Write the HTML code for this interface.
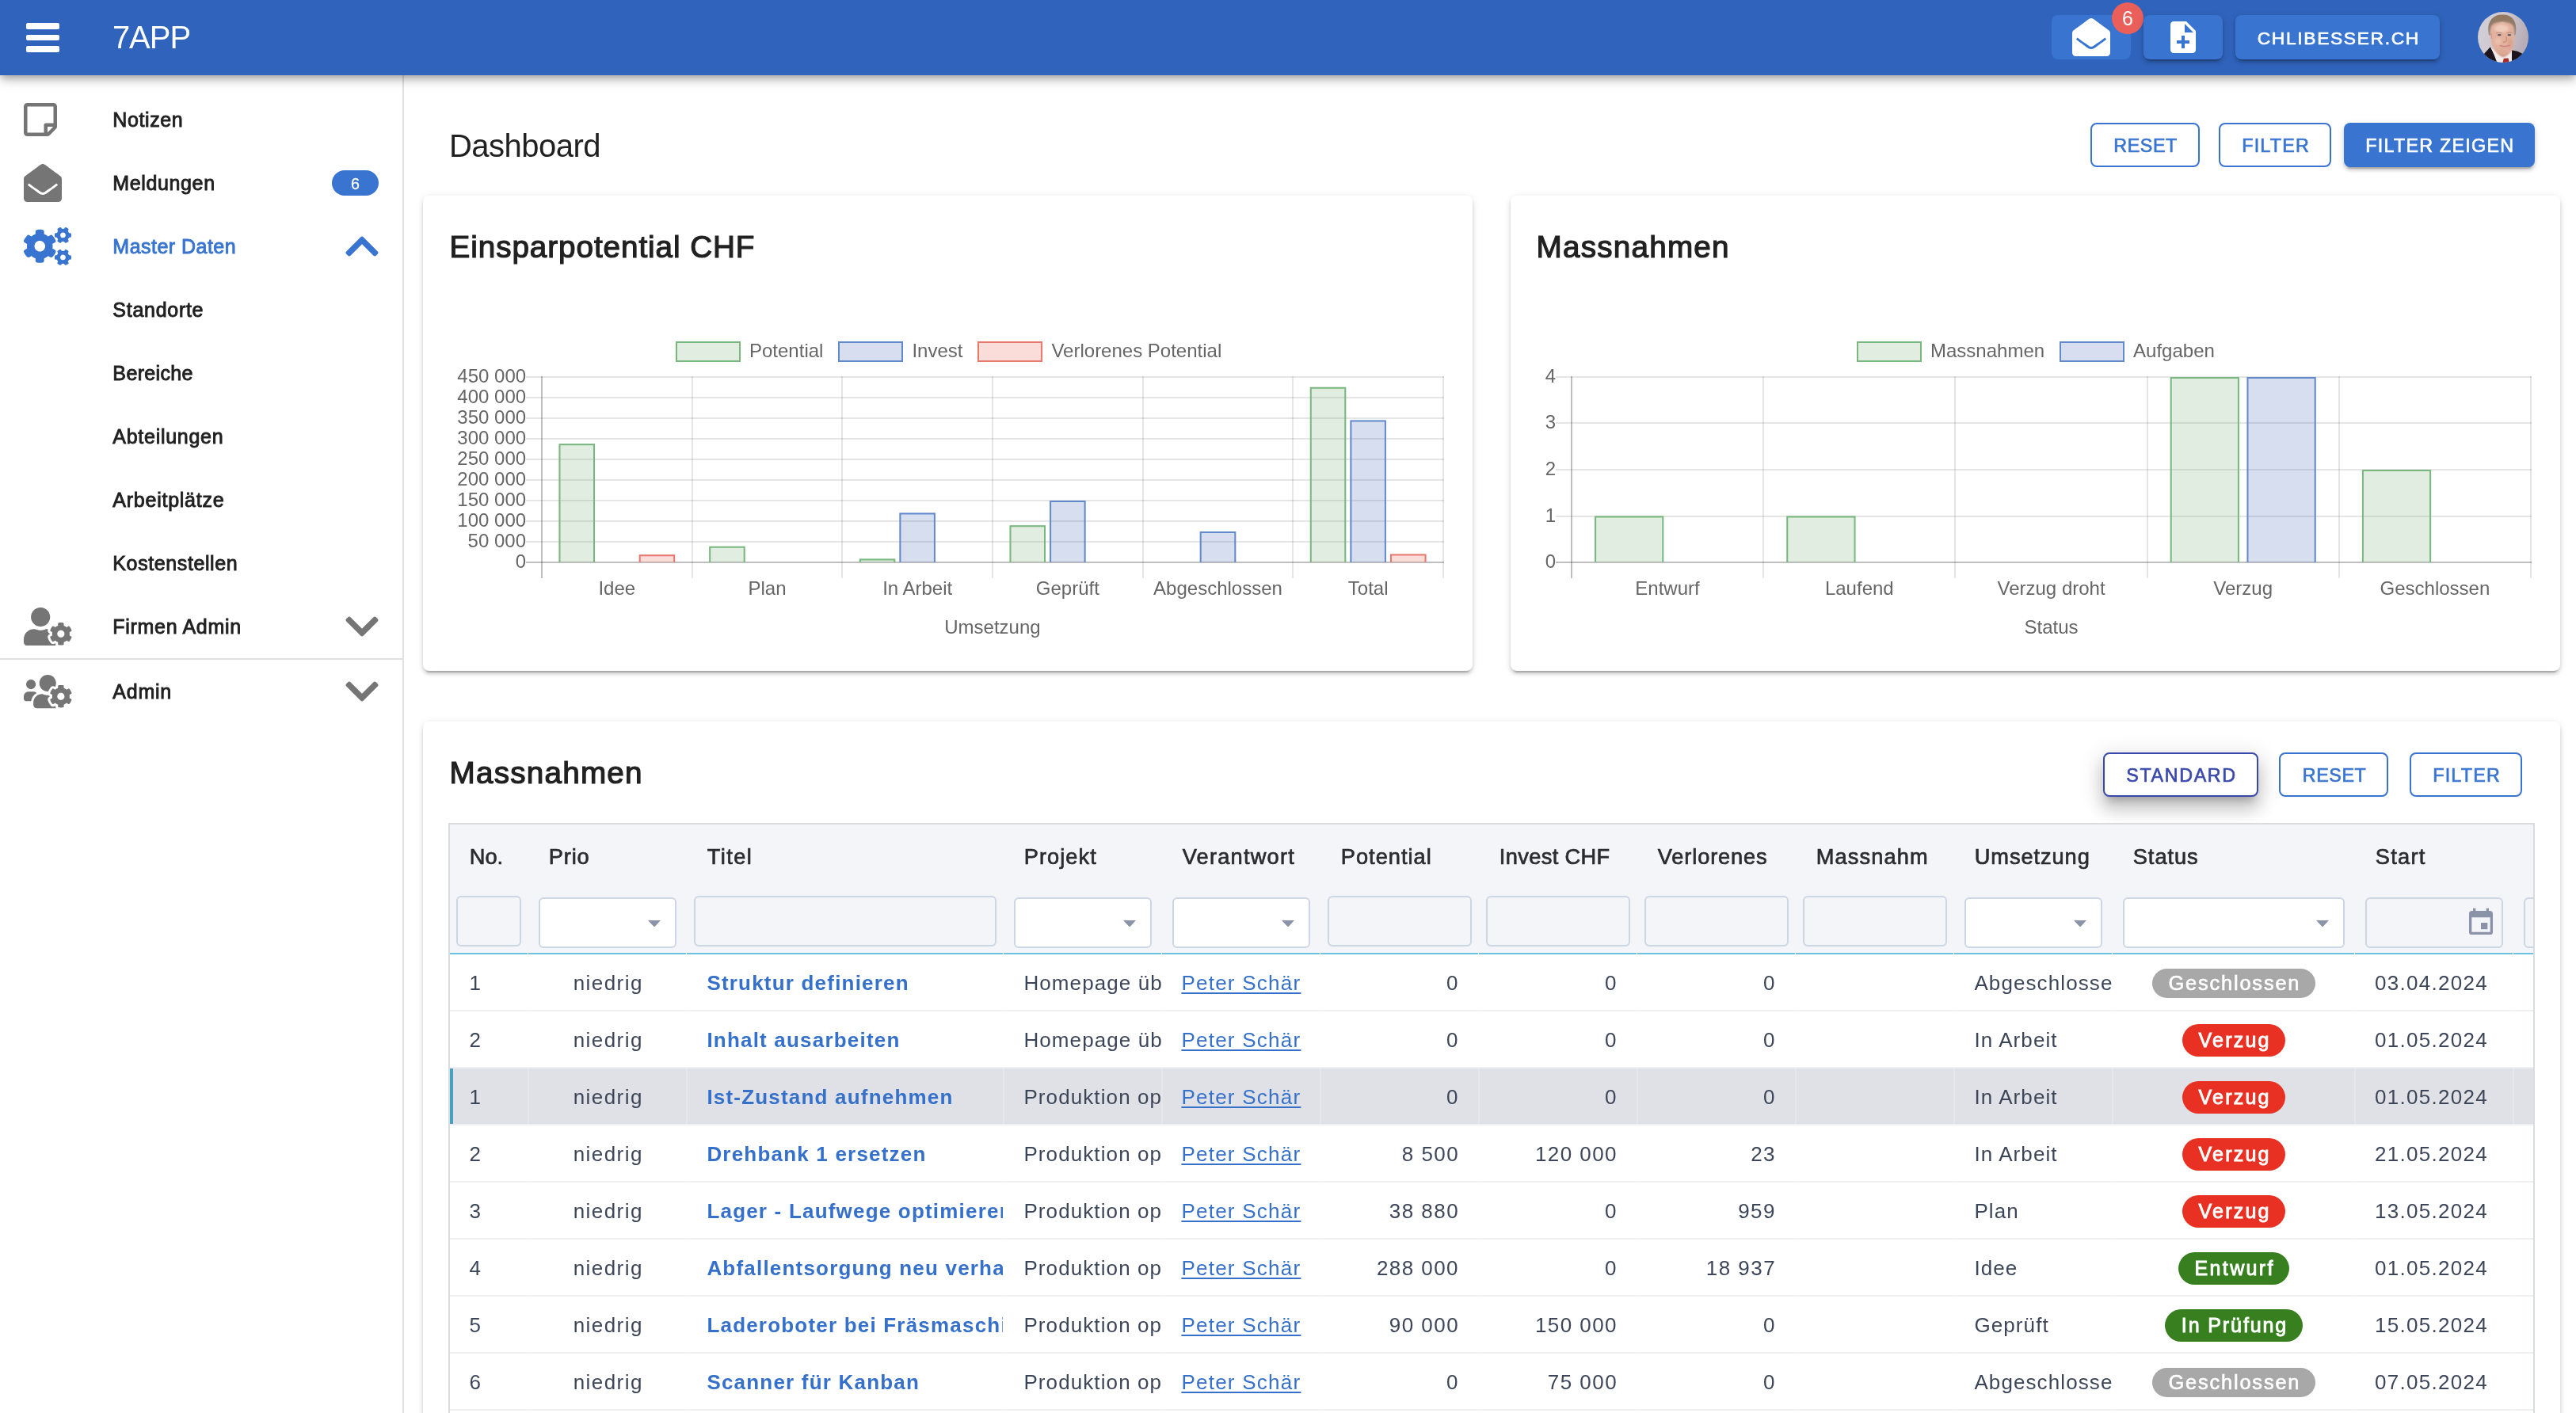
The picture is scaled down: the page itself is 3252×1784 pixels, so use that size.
<!DOCTYPE html>
<html lang="de"><head><meta charset="utf-8"><title>7APP Dashboard</title>
<style>
html,body{margin:0;padding:0;}
body{width:3252px;height:1784px;overflow:hidden;background:#fff;position:relative;font-family:"Liberation Sans",sans-serif;will-change:transform;}
.b{position:absolute;display:block;}
.t{position:absolute;white-space:nowrap;font-family:"Liberation Sans",sans-serif;}
@media (max-width:2000px){body{zoom:.5;}}
</style></head><body>
<div class="b" style="left:0px;top:95px;width:508px;height:1689px;background:#fff;"></div>
<div class="b" style="left:508px;top:95px;width:2px;height:1689px;background:#e0e0e0;"></div>
<div class="t" style="left:142.35px;top:134.83px;font-size:25.01px;line-height:33px;color:#212121;letter-spacing:0.586px;-webkit-text-stroke:0.9px #212121;">Notizen</div>
<div class="t" style="left:142.35px;top:214.83px;font-size:25.01px;line-height:33px;color:#212121;letter-spacing:0.625px;-webkit-text-stroke:0.9px #212121;">Meldungen</div>
<div class="t" style="left:142.35px;top:294.83px;font-size:25.01px;line-height:33px;color:#3874d0;letter-spacing:0.476px;-webkit-text-stroke:0.9px #3874d0;">Master Daten</div>
<div class="t" style="left:142.35px;top:374.83px;font-size:25.01px;line-height:33px;color:#212121;letter-spacing:0.720px;-webkit-text-stroke:0.9px #212121;">Standorte</div>
<div class="t" style="left:142.35px;top:454.83px;font-size:25.01px;line-height:33px;color:#212121;letter-spacing:0.359px;-webkit-text-stroke:0.9px #212121;">Bereiche</div>
<div class="t" style="left:142.35px;top:534.83px;font-size:25.01px;line-height:33px;color:#212121;letter-spacing:0.725px;-webkit-text-stroke:0.9px #212121;">Abteilungen</div>
<div class="t" style="left:142.35px;top:614.83px;font-size:25.01px;line-height:33px;color:#212121;letter-spacing:0.750px;-webkit-text-stroke:0.9px #212121;">Arbeitplätze</div>
<div class="t" style="left:142.35px;top:694.83px;font-size:25.01px;line-height:33px;color:#212121;letter-spacing:0.603px;-webkit-text-stroke:0.9px #212121;">Kostenstellen</div>
<div class="t" style="left:142.35px;top:774.83px;font-size:25.01px;line-height:33px;color:#212121;letter-spacing:0.681px;-webkit-text-stroke:0.9px #212121;">Firmen Admin</div>
<div class="t" style="left:142.35px;top:856.83px;font-size:25.01px;line-height:33px;color:#212121;letter-spacing:0.755px;-webkit-text-stroke:0.9px #212121;">Admin</div>
<div class="b" style="left:0px;top:831px;width:508px;height:2px;background:#e0e0e0;"></div>
<div class="b" style="left:419px;top:215px;width:59px;height:32px;background:#3874d0;border-radius:16px;"></div>
<div class="t" style="left:443.02px;top:219.18px;font-size:19.67px;line-height:26px;color:#fff;-webkit-text-stroke:0.3px #fff;">6</div>
<svg class="b" style="left:30px;top:127px" width="42" height="48" viewBox="0 0 448 512" ><path fill="#757575" d="M448 348.106V80c0-26.51-21.49-48-48-48H48C21.49 32 0 53.49 0 80v351.988c0 26.51 21.49 48 48 48h268.118a48 48 0 0 0 33.941-14.059l83.882-83.882A48 48 0 0 0 448 348.106zm-128 80v-76.118h76.118L320 428.106zM400 80v223.988H296c-13.255 0-24 10.745-24 24v104H48V80h352z"/></svg>
<svg class="b" style="left:30px;top:207px" width="48" height="48" viewBox="0 0 512 512" ><path fill="#757575" d="M512 464c0 26.51-21.49 48-48 48H48c-26.51 0-48-21.49-48-48V200.724a48 48 0 0 1 18.387-37.776c24.913-19.529 45.501-35.365 164.2-121.511C199.412 29.17 232.797-.347 256 .003c23.198-.354 56.596 29.172 73.413 41.433 118.687 86.137 139.303 101.995 164.2 121.512A48 48 0 0 1 512 200.724V464zm-65.666-196.605c-2.563-3.728-7.7-4.595-11.339-1.907-22.845 16.873-55.462 40.705-105.582 77.079-16.825 12.266-50.21 41.781-73.413 41.43-23.211.344-56.559-29.143-73.413-41.43-50.114-36.37-82.734-60.204-105.582-77.079-3.639-2.688-8.776-1.821-11.339 1.907l-9.072 13.196a7.998 7.998 0 0 0 1.839 10.967c22.887 16.899 55.454 40.69 105.303 76.868 20.274 14.781 56.524 47.813 92.264 47.573 35.724.242 71.961-32.771 92.263-47.573 49.85-36.179 82.418-59.97 105.303-76.868a7.998 7.998 0 0 0 1.839-10.967l-9.071-13.196z"/></svg>
<svg class="b" style="left:30px;top:287px" width="60" height="48" viewBox="0 0 640 512" ><path fill="#3874d0" d="M512.1 191l-8.2 14.3c-3 5.3-9.4 7.5-15.1 5.4-11.8-4.4-22.6-10.7-32.1-18.6-4.6-3.8-5.8-10.5-2.8-15.7l8.2-14.3c-6.9-8-12.3-17.3-15.9-27.4h-16.5c-6 0-11.2-4.3-12.2-10.3-2-12-2.1-24.6 0-37.1 1-6 6.2-10.4 12.2-10.4h16.5c3.6-10.1 9-19.4 15.9-27.4l-8.2-14.3c-3-5.2-1.9-11.9 2.8-15.7 9.5-7.9 20.4-14.2 32.1-18.6 5.7-2.1 12.1.1 15.1 5.4l8.2 14.3c10.5-1.9 21.2-1.9 31.7 0L552 6.3c3-5.3 9.4-7.5 15.1-5.4 11.8 4.4 22.6 10.7 32.1 18.6 4.6 3.8 5.8 10.5 2.8 15.7l-8.2 14.3c6.9 8 12.3 17.3 15.9 27.4h16.5c6 0 11.2 4.3 12.2 10.3 2 12 2.1 24.6 0 37.1-1 6-6.2 10.4-12.2 10.4h-16.5c-3.6 10.1-9 19.4-15.9 27.4l8.2 14.3c3 5.2 1.9 11.9-2.8 15.7-9.5 7.9-20.4 14.2-32.1 18.6-5.7 2.1-12.1-.1-15.1-5.4l-8.2-14.3c-10.4 1.9-21.2 1.9-31.7 0zm-10.5-58.8c38.5 29.6 82.4-14.3 52.8-52.8-38.5-29.7-82.4 14.3-52.8 52.8zM386.3 286.1l33.7 16.8c10.1 5.8 14.5 18.1 10.5 29.1-8.9 24.2-26.4 46.4-42.6 65.8-7.4 8.9-20.2 11.1-30.3 5.3l-29.1-16.8c-16 13.7-34.6 24.6-54.9 31.7v33.6c0 11.6-8.3 21.6-19.7 23.6-24.6 4.2-50.4 4.4-75.9 0-11.5-2-20-11.9-20-23.6V418c-20.3-7.2-38.9-18-54.9-31.7L74 403c-10 5.8-22.9 3.6-30.3-5.3-16.2-19.4-33.3-41.6-42.2-65.7-4-10.9.4-23.2 10.5-29.1l33.3-16.8c-3.9-20.9-3.9-42.4 0-63.4L12 205.8c-10.1-5.8-14.6-18.1-10.5-29 8.9-24.2 26-46.4 42.2-65.8 7.4-8.9 20.2-11.1 30.3-5.3l29.1 16.8c16-13.7 34.6-24.6 54.9-31.7V57.1c0-11.5 8.2-21.5 19.6-23.5 24.6-4.2 50.5-4.4 76-.1 11.5 2 20 11.9 20 23.6v33.6c20.3 7.2 38.9 18 54.9 31.7l29.1-16.8c10-5.8 22.9-3.6 30.3 5.3 16.2 19.4 33.2 41.6 42.1 65.8 4 10.9.1 23.2-10 29.1l-33.7 16.8c3.9 21 3.9 42.5 0 63.5zm-117.6 21.1c59.2-77-28.7-164.9-105.7-105.7-59.2 77 28.7 164.9 105.7 105.7zm243.4 182.7l-8.2 14.3c-3 5.3-9.4 7.5-15.1 5.4-11.8-4.4-22.6-10.7-32.1-18.6-4.6-3.8-5.8-10.5-2.8-15.7l8.2-14.3c-6.9-8-12.3-17.3-15.9-27.4h-16.5c-6 0-11.2-4.3-12.2-10.3-2-12-2.1-24.6 0-37.1 1-6 6.2-10.4 12.2-10.4h16.5c3.6-10.1 9-19.4 15.9-27.4l-8.2-14.3c-3-5.2-1.9-11.9 2.8-15.7 9.5-7.9 20.4-14.2 32.1-18.6 5.7-2.1 12.1.1 15.1 5.4l8.2 14.3c10.5-1.9 21.2-1.9 31.7 0l8.2-14.3c3-5.3 9.4-7.5 15.1-5.4 11.8 4.4 22.6 10.7 32.1 18.6 4.6 3.8 5.8 10.5 2.8 15.7l-8.2 14.3c6.9 8 12.3 17.3 15.9 27.4h16.5c6 0 11.2 4.3 12.2 10.3 2 12 2.1 24.6 0 37.1-1 6-6.2 10.4-12.2 10.4h-16.5c-3.6 10.1-9 19.4-15.9 27.4l8.2 14.3c3 5.2 1.9 11.9-2.8 15.7-9.5 7.9-20.4 14.2-32.1 18.6-5.7 2.1-12.1-.1-15.1-5.4l-8.2-14.3c-10.4 1.9-21.2 1.9-31.7 0zM501.6 431c38.5 29.6 82.4-14.3 52.8-52.8-38.5-29.6-82.4 14.3-52.8 52.8z"/></svg>
<svg class="b" style="left:30px;top:767px" width="60.5" height="48.4" viewBox="0 0 640 512" ><path fill="#757575" d="M610.5 373.3c2.6-14.1 2.6-28.5 0-42.6l25.8-14.9c3-1.7 4.3-5.2 3.3-8.5-6.7-21.6-18.2-41.2-33.2-57.4-2.3-2.5-6-3.1-9-1.4l-25.8 14.9c-10.9-9.3-23.4-16.5-36.900-21.3v-29.8c0-3.400-2.400-6.400-5.700-7.100-22.300-5-45-4.800-66.200 0-3.300.7-5.700 3.700-5.700 7.100v29.800c-13.500 4.800-26 12-36.900 21.300l-25.800-14.900c-2.900-1.700-6.700-1.100-9 1.400-15 16.200-26.500 35.800-33.200 57.400-1 3.300.4 6.800 3.300 8.500l25.800 14.900c-2.600 14.100-2.600 28.500 0 42.600l-25.800 14.900c-3 1.700-4.300 5.200-3.300 8.500 6.700 21.600 18.200 41.100 33.200 57.400 2.300 2.500 6 3.100 9 1.400l25.800-14.900c10.900 9.300 23.400 16.500 36.900 21.300v29.800c0 3.400 2.400 6.400 5.700 7.100 22.300 5 45 4.800 66.200 0 3.300-.7 5.700-3.700 5.700-7.100v-29.800c13.500-4.800 26-12 36.900-21.300l25.800 14.900c2.900 1.700 6.700 1.100 9-1.400 15-16.200 26.500-35.800 33.200-57.400 1-3.300-.4-6.800-3.300-8.500l-25.800-14.900zM496 400.500c-26.800 0-48.500-21.800-48.500-48.500s21.800-48.500 48.500-48.500 48.500 21.800 48.500 48.500-21.700 48.500-48.500 48.500zM224 256c70.700 0 128-57.300 128-128S294.700 0 224 0 96 57.300 96 128s57.300 128 128 128zm201.200 226.500c-2.300-1.200-4.600-2.600-6.800-3.900l-7.900 4.600c-6 3.400-12.800 5.300-19.600 5.300-10.900 0-21.400-4.600-28.900-12.600-18.300-19.800-32.300-43.900-40.200-69.600-5.500-17.700 1.900-36.400 17.900-45.700l7.900-4.600c-.1-2.600-.1-5.200 0-7.800l-7.900-4.600c-16-9.200-23.400-28-17.900-45.700.9-2.900 2.200-5.800 3.200-8.700-3.800-.3-7.500-1.200-11.400-1.200h-16.700c-22.200 10.200-46.900 16-72.900 16s-50.600-5.800-72.900-16h-16.700C60.200 288 0 348.200 0 422.400V464c0 26.500 21.500 48 48 48h352c10.100 0 19.500-3.200 27.200-8.500-1.200-3.800-2-7.700-2-11.800v-9.200z"/></svg>
<svg class="b" style="left:30px;top:849px" width="60.5" height="48.4" viewBox="0 0 640 512" ><path fill="#757575" d="M610.5 341.3c2.6-14.1 2.6-28.5 0-42.600l25.800-14.900c3-1.700 4.300-5.200 3.300-8.500-6.700-21.600-18.200-41.200-33.200-57.400-2.300-2.500-6-3.100-9-1.400l-25.800 14.900c-10.900-9.300-23.400-16.500-36.900-21.300v-29.800c0-3.400-2.400-6.400-5.700-7.100-22.300-5-45-4.800-66.200 0-3.300.7-5.700 3.700-5.700 7.100v29.800c-13.500 4.800-26 12-36.900 21.300l-25.800-14.900c-2.900-1.700-6.700-1.100-9 1.400-15 16.200-26.500 35.800-33.200 57.400-1 3.300.4 6.800 3.300 8.500l25.800 14.900c-2.600 14.100-2.600 28.500 0 42.600l-25.800 14.900c-3 1.700-4.300 5.200-3.300 8.500 6.700 21.600 18.200 41.100 33.200 57.400 2.300 2.500 6 3.100 9 1.400l25.800-14.900c10.900 9.300 23.400 16.500 36.900 21.300v29.800c0 3.400 2.400 6.400 5.700 7.100 22.300 5 45 4.800 66.200 0 3.300-.7 5.700-3.700 5.700-7.100v-29.800c13.500-4.800 26-12 36.900-21.300l25.800 14.900c2.900 1.700 6.700 1.100 9-1.400 15-16.200 26.500-35.800 33.200-57.400 1-3.300-.4-6.800-3.300-8.500l-25.800-14.900zM496 368.500c-26.800 0-48.500-21.800-48.500-48.500s21.800-48.500 48.500-48.500 48.500 21.800 48.500 48.500-21.700 48.500-48.500 48.500zM96 224c35.300 0 64-28.700 64-64s-28.700-64-64-64-64 28.700-64 64 28.700 64 64 64zm224 32c1.900 0 3.700-.5 5.600-.6 8.300-21.700 20.500-42.100 36.300-59.200 7.400-8 17.900-12.600 28.900-12.600 6.900 0 13.700 1.800 19.600 5.300l7.900 4.600c.8-.5 1.600-.9 2.400-1.400 7-14.600 11.200-30.800 11.200-48 0-61.900-50.100-112-112-112S208 82.100 208 144c0 61.900 50.100 112 112 112zm105.200 194.500c-2.300-1.200-4.600-2.600-6.800-3.900-8.200 4.800-15.300 9.800-27.500 9.800-10.900 0-21.400-4.600-28.900-12.600-18.300-19.800-32.300-43.900-40.200-69.600-10.700-34.500 24.900-49.700 25.800-50.300-.1-2.600-.1-5.200 0-7.800l-7.900-4.600c-3.800-2.200-7-5-9.800-8.100-3.300.2-6.500.6-9.800.6-24.600 0-47.600-6-68.500-16h-8.300C179.600 288 128 339.600 128 403.200V432c0 26.500 21.500 48 48 48h255.400c-3.700-6-6.200-12.800-6.200-20.300v-9.200zM173.100 274.600C161.500 263.100 145.600 256 128 256H64c-35.300 0-64 28.700-64 64v32c0 17.700 14.300 32 32 32h65.900c6.300-47.400 34.900-87.300 75.200-109.400z"/></svg>
<svg class="b" style="left:436px;top:287px" width="42" height="48" viewBox="0 0 448 512" ><path fill="#3874d0" d="M240.971 130.524l194.343 194.343c9.373 9.373 9.373 24.569 0 33.941l-22.667 22.667c-9.357 9.357-24.522 9.375-33.901.04L224 227.495 69.255 381.516c-9.379 9.335-24.544 9.317-33.901-.04l-22.667-22.667c-9.373-9.373-9.373-24.569 0-33.941L207.03 130.525c9.372-9.373 24.568-9.373 33.941-.001z"/></svg>
<svg class="b" style="left:436px;top:767px" width="42" height="48" viewBox="0 0 448 512" ><path fill="#757575" d="M207.029 381.476L12.686 187.132c-9.373-9.373-9.373-24.569 0-33.941l22.667-22.667c9.357-9.357 24.522-9.375 33.901-.04L224 284.505l154.745-154.021c9.379-9.335 24.544-9.317 33.901.04l22.667 22.667c9.373 9.373 9.373 24.569 0 33.941L240.971 381.476c-9.373 9.372-24.569 9.372-33.942 0z"/></svg>
<svg class="b" style="left:436px;top:849px" width="42" height="48" viewBox="0 0 448 512" ><path fill="#757575" d="M207.029 381.476L12.686 187.132c-9.373-9.373-9.373-24.569 0-33.941l22.667-22.667c9.357-9.357 24.522-9.375 33.901-.04L224 284.505l154.745-154.021c9.379-9.335 24.544-9.317 33.901.04l22.667 22.667c9.373 9.373 9.373 24.569 0 33.941L240.971 381.476c-9.373 9.372-24.569 9.372-33.942 0z"/></svg>
<div class="t" style="left:566.90px;top:157.64px;font-size:40px;line-height:52px;color:#212121;letter-spacing:-0.506px;">Dashboard</div>
<div class="b" style="left:2639px;top:155px;width:138px;height:56px;border:2px solid #3874d0;border-radius:8px;box-sizing:border-box;background:#fff;"></div>
<div class="t" style="left:2668.22px;top:169.23px;font-size:23.29px;line-height:30px;color:#3874d0;letter-spacing:0.604px;-webkit-text-stroke:0.65px #3874d0;">RESET</div>
<div class="b" style="left:2801px;top:155px;width:142px;height:56px;border:2px solid #3874d0;border-radius:8px;box-sizing:border-box;background:#fff;"></div>
<div class="t" style="left:2830.22px;top:169.23px;font-size:23.29px;line-height:30px;color:#3874d0;letter-spacing:1.233px;-webkit-text-stroke:0.65px #3874d0;">FILTER</div>
<div class="b" style="left:2959px;top:155px;width:241px;height:56px;background:#3874d0;border-radius:8px;box-shadow:0 6px 2px -4px rgba(0,0,0,.2),0 4px 4px 0 rgba(0,0,0,.14),0 2px 10px 0 rgba(0,0,0,.12);"></div>
<div class="t" style="left:2986.22px;top:169.23px;font-size:23.29px;line-height:30px;color:#fff;letter-spacing:1.271px;-webkit-text-stroke:0.65px #fff;">FILTER ZEIGEN</div>
<div class="b" style="left:534px;top:247px;width:1325px;height:600px;background:#fff;border-radius:8px;box-shadow:0 6px 2px -4px rgba(0,0,0,.2),0 4px 4px 0 rgba(0,0,0,.14),0 2px 10px 0 rgba(0,0,0,.12);"></div>
<div class="b" style="left:1907px;top:247px;width:1325px;height:600px;background:#fff;border-radius:8px;box-shadow:0 6px 2px -4px rgba(0,0,0,.2),0 4px 4px 0 rgba(0,0,0,.14),0 2px 10px 0 rgba(0,0,0,.12);"></div>
<div class="b" style="left:534px;top:911px;width:2698px;height:900px;background:#fff;border-radius:8px;box-shadow:0 6px 2px -4px rgba(0,0,0,.2),0 4px 4px 0 rgba(0,0,0,.14),0 2px 10px 0 rgba(0,0,0,.12);"></div>
<div class="t" style="left:567.50px;top:286.60px;font-size:38.68px;line-height:50px;color:#212121;letter-spacing:0.917px;-webkit-text-stroke:1.2px #212121;">Einsparpotential CHF</div>
<div class="t" style="left:1939.50px;top:286.60px;font-size:38.68px;line-height:50px;color:#212121;letter-spacing:1.213px;-webkit-text-stroke:1.2px #212121;">Massnahmen</div>
<div class="t" style="left:567.50px;top:950.60px;font-size:38.68px;line-height:50px;color:#212121;letter-spacing:1.213px;-webkit-text-stroke:1.2px #212121;">Massnahmen</div>
<svg class="b" style="left:0;top:0" width="3252" height="900" viewBox="0 0 3252 900"><rect x="683" y="475" width="2" height="255" fill="rgba(0,0,0,.25)"/><rect x="873" y="475" width="2" height="255" fill="rgba(0,0,0,.1)"/><rect x="1062" y="475" width="2" height="255" fill="rgba(0,0,0,.1)"/><rect x="1252" y="475" width="2" height="255" fill="rgba(0,0,0,.1)"/><rect x="1442" y="475" width="2" height="255" fill="rgba(0,0,0,.1)"/><rect x="1631" y="475" width="2" height="255" fill="rgba(0,0,0,.1)"/><rect x="1821" y="475" width="2" height="255" fill="rgba(0,0,0,.1)"/><rect x="664" y="709" width="1159" height="2" fill="rgba(0,0,0,.25)"/><rect x="664" y="683" width="1159" height="2" fill="rgba(0,0,0,.1)"/><rect x="664" y="657" width="1159" height="2" fill="rgba(0,0,0,.1)"/><rect x="664" y="631" width="1159" height="2" fill="rgba(0,0,0,.1)"/><rect x="664" y="605" width="1159" height="2" fill="rgba(0,0,0,.1)"/><rect x="664" y="579" width="1159" height="2" fill="rgba(0,0,0,.1)"/><rect x="664" y="553" width="1159" height="2" fill="rgba(0,0,0,.1)"/><rect x="664" y="527" width="1159" height="2" fill="rgba(0,0,0,.1)"/><rect x="664" y="501" width="1159" height="2" fill="rgba(0,0,0,.1)"/><rect x="664" y="475" width="1159" height="2" fill="rgba(0,0,0,.1)"/><rect x="705.5" y="560.2" width="45.5" height="149.8" fill="rgba(100,165,100,.2)"/><path d="M706.5 710 L706.5 561.2 L750.0 561.2 L750.0 710" fill="none" stroke="#78b77d" stroke-width="2"/><rect x="806.7" y="700.2" width="45.5" height="9.8" fill="rgba(232,80,66,.2)"/><path d="M807.7 710 L807.7 701.2 L851.2 701.2 L851.2 710" fill="none" stroke="#e8796e" stroke-width="2"/><rect x="895.2" y="689.8" width="45.5" height="20.2" fill="rgba(100,165,100,.2)"/><path d="M896.2 710 L896.2 690.8 L939.7 690.8 L939.7 710" fill="none" stroke="#78b77d" stroke-width="2"/><rect x="1084.8" y="705.6" width="45.5" height="4.4" fill="rgba(100,165,100,.2)"/><path d="M1085.8 710 L1085.8 706.6 L1129.3 706.6 L1129.3 710" fill="none" stroke="#78b77d" stroke-width="2"/><rect x="1135.4" y="647.6" width="45.5" height="62.4" fill="rgba(55,92,182,.2)"/><path d="M1136.4 710 L1136.4 648.6 L1179.9 648.6 L1179.9 710" fill="none" stroke="#628acb" stroke-width="2"/><rect x="1274.5" y="663.2" width="45.5" height="46.8" fill="rgba(100,165,100,.2)"/><path d="M1275.5 710 L1275.5 664.2 L1319.0 664.2 L1319.0 710" fill="none" stroke="#78b77d" stroke-width="2"/><rect x="1325.1" y="632.0" width="45.5" height="78.0" fill="rgba(55,92,182,.2)"/><path d="M1326.1 710 L1326.1 633.0 L1369.6 633.0 L1369.6 710" fill="none" stroke="#628acb" stroke-width="2"/><rect x="1514.7" y="671.0" width="45.5" height="39.0" fill="rgba(55,92,182,.2)"/><path d="M1515.7 710 L1515.7 672.0 L1559.3 672.0 L1559.3 710" fill="none" stroke="#628acb" stroke-width="2"/><rect x="1653.8" y="488.8" width="45.5" height="221.2" fill="rgba(100,165,100,.2)"/><path d="M1654.8 710 L1654.8 489.8 L1698.3 489.8 L1698.3 710" fill="none" stroke="#78b77d" stroke-width="2"/><rect x="1704.4" y="530.6" width="45.5" height="179.4" fill="rgba(55,92,182,.2)"/><path d="M1705.4 710 L1705.4 531.6 L1748.9 531.6 L1748.9 710" fill="none" stroke="#628acb" stroke-width="2"/><rect x="1755.0" y="699.6" width="45.5" height="10.4" fill="rgba(232,80,66,.2)"/><path d="M1756.0 710 L1756.0 700.6 L1799.5 700.6 L1799.5 710" fill="none" stroke="#e8796e" stroke-width="2"/></svg>
<div class="t" style="left:650.85px;top:692.68px;font-size:24px;line-height:31px;color:#666;">0</div>
<div class="t" style="left:590.60px;top:666.68px;font-size:24px;line-height:31px;color:#666;">50 000</div>
<div class="t" style="left:577.35px;top:640.68px;font-size:24px;line-height:31px;color:#666;">100 000</div>
<div class="t" style="left:577.35px;top:614.68px;font-size:24px;line-height:31px;color:#666;">150 000</div>
<div class="t" style="left:577.35px;top:588.68px;font-size:24px;line-height:31px;color:#666;">200 000</div>
<div class="t" style="left:577.35px;top:562.68px;font-size:24px;line-height:31px;color:#666;">250 000</div>
<div class="t" style="left:577.35px;top:536.68px;font-size:24px;line-height:31px;color:#666;">300 000</div>
<div class="t" style="left:577.35px;top:510.68px;font-size:24px;line-height:31px;color:#666;">350 000</div>
<div class="t" style="left:577.35px;top:484.68px;font-size:24px;line-height:31px;color:#666;">400 000</div>
<div class="t" style="left:577.35px;top:458.68px;font-size:24px;line-height:31px;color:#666;">450 000</div>
<div class="t" style="left:755.46px;top:727.18px;font-size:24px;line-height:31px;color:#666;">Idee</div>
<div class="t" style="left:944.50px;top:727.18px;font-size:24px;line-height:31px;color:#666;">Plan</div>
<div class="t" style="left:1114.17px;top:727.18px;font-size:24px;line-height:31px;color:#666;">In Arbeit</div>
<div class="t" style="left:1307.83px;top:727.18px;font-size:24px;line-height:31px;color:#666;">Geprüft</div>
<div class="t" style="left:1456.12px;top:727.18px;font-size:24px;line-height:31px;color:#666;">Abgeschlossen</div>
<div class="t" style="left:1701.79px;top:727.18px;font-size:24px;line-height:31px;color:#666;">Total</div>
<div class="t" style="left:1192.25px;top:776.18px;font-size:24px;line-height:31px;color:#666;">Umsetzung</div>
<div class="b" style="left:853px;top:431px;width:82px;height:26px;background:rgba(100,165,100,.2);border:2px solid #78b77d;box-sizing:border-box;background-clip:padding-box;"></div>
<div class="t" style="left:946.00px;top:427.18px;font-size:24px;line-height:31px;color:#666;">Potential</div>
<div class="b" style="left:1058.3984375px;top:431px;width:82px;height:26px;background:rgba(55,92,182,.2);border:2px solid #628acb;box-sizing:border-box;background-clip:padding-box;"></div>
<div class="t" style="left:1151.40px;top:427.18px;font-size:24px;line-height:31px;color:#666;">Invest</div>
<div class="b" style="left:1234.4296875px;top:431px;width:82px;height:26px;background:rgba(232,80,66,.2);border:2px solid #e8796e;box-sizing:border-box;background-clip:padding-box;"></div>
<div class="t" style="left:1327.43px;top:427.18px;font-size:24px;line-height:31px;color:#666;">Verlorenes Potential</div>
<svg class="b" style="left:0;top:0" width="3252" height="900" viewBox="0 0 3252 900"><rect x="1983" y="475" width="2" height="255" fill="rgba(0,0,0,.25)"/><rect x="2225" y="475" width="2" height="255" fill="rgba(0,0,0,.1)"/><rect x="2467" y="475" width="2" height="255" fill="rgba(0,0,0,.1)"/><rect x="2710" y="475" width="2" height="255" fill="rgba(0,0,0,.1)"/><rect x="2952" y="475" width="2" height="255" fill="rgba(0,0,0,.1)"/><rect x="3194" y="475" width="2" height="255" fill="rgba(0,0,0,.1)"/><rect x="1964" y="709" width="1232" height="2" fill="rgba(0,0,0,.25)"/><rect x="1964" y="651" width="1232" height="2" fill="rgba(0,0,0,.1)"/><rect x="1964" y="592" width="1232" height="2" fill="rgba(0,0,0,.1)"/><rect x="1964" y="533" width="1232" height="2" fill="rgba(0,0,0,.1)"/><rect x="1964" y="475" width="1232" height="2" fill="rgba(0,0,0,.1)"/><rect x="2013.1" y="651.5" width="87.2" height="58.5" fill="rgba(100,165,100,.2)"/><path d="M2014.1 710 L2014.1 652.5 L2099.3 652.5 L2099.3 710" fill="none" stroke="#78b77d" stroke-width="2"/><rect x="2255.3" y="651.5" width="87.2" height="58.5" fill="rgba(100,165,100,.2)"/><path d="M2256.3 710 L2256.3 652.5 L2341.5 652.5 L2341.5 710" fill="none" stroke="#78b77d" stroke-width="2"/><rect x="2739.7" y="476.0" width="87.2" height="234.0" fill="rgba(100,165,100,.2)"/><path d="M2740.7 710 L2740.7 477.0 L2825.9 477.0 L2825.9 710" fill="none" stroke="#78b77d" stroke-width="2"/><rect x="2836.5" y="476.0" width="87.2" height="234.0" fill="rgba(55,92,182,.2)"/><path d="M2837.5 710 L2837.5 477.0 L2922.7 477.0 L2922.7 710" fill="none" stroke="#628acb" stroke-width="2"/><rect x="2981.9" y="593.0" width="87.2" height="117.0" fill="rgba(100,165,100,.2)"/><path d="M2982.9 710 L2982.9 594.0 L3068.1 594.0 L3068.1 710" fill="none" stroke="#78b77d" stroke-width="2"/></svg>
<div class="t" style="left:1950.85px;top:692.68px;font-size:24px;line-height:31px;color:#666;">0</div>
<div class="t" style="left:1950.85px;top:634.68px;font-size:24px;line-height:31px;color:#666;">1</div>
<div class="t" style="left:1950.85px;top:575.68px;font-size:24px;line-height:31px;color:#666;">2</div>
<div class="t" style="left:1950.85px;top:516.68px;font-size:24px;line-height:31px;color:#666;">3</div>
<div class="t" style="left:1950.85px;top:458.68px;font-size:24px;line-height:31px;color:#666;">4</div>
<div class="t" style="left:2064.35px;top:727.18px;font-size:24px;line-height:31px;color:#666;">Entwurf</div>
<div class="t" style="left:2303.93px;top:727.18px;font-size:24px;line-height:31px;color:#666;">Laufend</div>
<div class="t" style="left:2521.50px;top:727.18px;font-size:24px;line-height:31px;color:#666;">Verzug droht</div>
<div class="t" style="left:2794.32px;top:727.18px;font-size:24px;line-height:31px;color:#666;">Verzug</div>
<div class="t" style="left:3004.52px;top:727.18px;font-size:24px;line-height:31px;color:#666;">Geschlossen</div>
<div class="t" style="left:2555.50px;top:776.18px;font-size:24px;line-height:31px;color:#666;">Status</div>
<div class="b" style="left:2344px;top:431px;width:82px;height:26px;background:rgba(100,165,100,.2);border:2px solid #78b77d;box-sizing:border-box;background-clip:padding-box;"></div>
<div class="t" style="left:2437.00px;top:427.18px;font-size:24px;line-height:31px;color:#666;">Massnahmen</div>
<div class="b" style="left:2600.0703125px;top:431px;width:82px;height:26px;background:rgba(55,92,182,.2);border:2px solid #628acb;box-sizing:border-box;background-clip:padding-box;"></div>
<div class="t" style="left:2693.07px;top:427.18px;font-size:24px;line-height:31px;color:#666;">Aufgaben</div>
<div class="b" style="left:2655px;top:950px;width:196px;height:56px;border:2px solid #3949ab;border-radius:8px;box-sizing:border-box;background:#fff;box-shadow:0 10px 10px -6px rgba(0,0,0,.2),0 16px 20px 2px rgba(0,0,0,.14),0 6px 28px 4px rgba(0,0,0,.12);"></div>
<div class="t" style="left:2684.22px;top:964.23px;font-size:23.29px;line-height:30px;color:#3949ab;letter-spacing:1.655px;-webkit-text-stroke:0.65px #3949ab;">STANDARD</div>
<div class="b" style="left:2877px;top:950px;width:138px;height:56px;border:2px solid #3874d0;border-radius:8px;box-sizing:border-box;background:#fff;"></div>
<div class="t" style="left:2906.72px;top:964.23px;font-size:23.29px;line-height:30px;color:#3874d0;letter-spacing:0.604px;-webkit-text-stroke:0.65px #3874d0;">RESET</div>
<div class="b" style="left:3042px;top:950px;width:142px;height:56px;border:2px solid #3874d0;border-radius:8px;box-sizing:border-box;background:#fff;"></div>
<div class="t" style="left:3071.22px;top:964.23px;font-size:23.29px;line-height:30px;color:#3874d0;letter-spacing:1.233px;-webkit-text-stroke:0.65px #3874d0;">FILTER</div>
<div class="b" style="left:566px;top:1039px;width:2634px;height:760px;border:2px solid #d8dcde;box-sizing:border-box;background:#fff;"></div>
<div class="b" style="left:568px;top:1041px;width:2630px;height:162px;background:#f4f5f9;"></div>
<div class="t" style="left:592.75px;top:1064.06px;font-size:27.23px;line-height:35px;color:#2b2b30;letter-spacing:0.016px;-webkit-text-stroke:0.7px #2b2b30;">No.</div>
<div class="b" style="left:568px;top:1203px;width:98px;height:2px;background:#6cc3e0;"></div>
<div class="t" style="left:692.75px;top:1064.06px;font-size:27.23px;line-height:35px;color:#2b2b30;letter-spacing:0.845px;-webkit-text-stroke:0.7px #2b2b30;">Prio</div>
<div class="b" style="left:667px;top:1203px;width:199px;height:2px;background:#6cc3e0;"></div>
<div class="t" style="left:892.75px;top:1064.06px;font-size:27.23px;line-height:35px;color:#2b2b30;letter-spacing:1.384px;-webkit-text-stroke:0.7px #2b2b30;">Titel</div>
<div class="b" style="left:867px;top:1203px;width:399px;height:2px;background:#6cc3e0;"></div>
<div class="t" style="left:1292.75px;top:1064.06px;font-size:27.23px;line-height:35px;color:#2b2b30;letter-spacing:1.052px;-webkit-text-stroke:0.7px #2b2b30;">Projekt</div>
<div class="b" style="left:1267px;top:1203px;width:199px;height:2px;background:#6cc3e0;"></div>
<div class="t" style="left:1492.75px;top:1064.06px;font-size:27.23px;line-height:35px;color:#2b2b30;letter-spacing:1.205px;-webkit-text-stroke:0.7px #2b2b30;">Verantwort</div>
<div class="b" style="left:1467px;top:1203px;width:199px;height:2px;background:#6cc3e0;"></div>
<div class="t" style="left:1692.75px;top:1064.06px;font-size:27.23px;line-height:35px;color:#2b2b30;letter-spacing:1.010px;-webkit-text-stroke:0.7px #2b2b30;">Potential</div>
<div class="b" style="left:1667px;top:1203px;width:199px;height:2px;background:#6cc3e0;"></div>
<div class="t" style="left:1892.75px;top:1064.06px;font-size:27.23px;line-height:35px;color:#2b2b30;letter-spacing:0.372px;-webkit-text-stroke:0.7px #2b2b30;">Invest CHF</div>
<div class="b" style="left:1867px;top:1203px;width:199px;height:2px;background:#6cc3e0;"></div>
<div class="t" style="left:2092.75px;top:1064.06px;font-size:27.23px;line-height:35px;color:#2b2b30;letter-spacing:0.872px;-webkit-text-stroke:0.7px #2b2b30;">Verlorenes</div>
<div class="b" style="left:2067px;top:1203px;width:199px;height:2px;background:#6cc3e0;"></div>
<div class="t" style="left:2292.75px;top:1064.06px;font-size:27.23px;line-height:35px;color:#2b2b30;letter-spacing:1.121px;-webkit-text-stroke:0.7px #2b2b30;">Massnahm</div>
<div class="b" style="left:2267px;top:1203px;width:199px;height:2px;background:#6cc3e0;"></div>
<div class="t" style="left:2492.75px;top:1064.06px;font-size:27.23px;line-height:35px;color:#2b2b30;letter-spacing:0.919px;-webkit-text-stroke:0.7px #2b2b30;">Umsetzung</div>
<div class="b" style="left:2467px;top:1203px;width:199px;height:2px;background:#6cc3e0;"></div>
<div class="t" style="left:2692.75px;top:1064.06px;font-size:27.23px;line-height:35px;color:#2b2b30;letter-spacing:0.961px;-webkit-text-stroke:0.7px #2b2b30;">Status</div>
<div class="b" style="left:2667px;top:1203px;width:305px;height:2px;background:#6cc3e0;"></div>
<div class="t" style="left:2998.75px;top:1064.06px;font-size:27.23px;line-height:35px;color:#2b2b30;letter-spacing:1.261px;-webkit-text-stroke:0.7px #2b2b30;">Start</div>
<div class="b" style="left:2973px;top:1203px;width:199px;height:2px;background:#6cc3e0;"></div>
<div class="b" style="left:3173px;top:1203px;width:25px;height:2px;background:#6cc3e0;"></div>
<div class="b" style="left:576px;top:1131px;width:82px;height:64px;border:2px solid #ccd6e4;border-radius:6px;box-sizing:border-box;"></div>
<div class="b" style="left:680px;top:1133px;width:174px;height:64px;border:2px solid #ccd6e4;border-radius:6px;box-sizing:border-box;background:#fff;"></div>
<svg class="b" style="left:818px;top:1161.5px" width="16" height="8.5" viewBox="0 0 16 8.5"><path d="M0 0H16L8 8.5Z" fill="#8b93a9"/></svg>
<div class="b" style="left:876px;top:1131px;width:382px;height:64px;border:2px solid #ccd6e4;border-radius:6px;box-sizing:border-box;"></div>
<div class="b" style="left:1280px;top:1133px;width:174px;height:64px;border:2px solid #ccd6e4;border-radius:6px;box-sizing:border-box;background:#fff;"></div>
<svg class="b" style="left:1418px;top:1161.5px" width="16" height="8.5" viewBox="0 0 16 8.5"><path d="M0 0H16L8 8.5Z" fill="#8b93a9"/></svg>
<div class="b" style="left:1480px;top:1133px;width:174px;height:64px;border:2px solid #ccd6e4;border-radius:6px;box-sizing:border-box;background:#fff;"></div>
<svg class="b" style="left:1618px;top:1161.5px" width="16" height="8.5" viewBox="0 0 16 8.5"><path d="M0 0H16L8 8.5Z" fill="#8b93a9"/></svg>
<div class="b" style="left:1676px;top:1131px;width:182px;height:64px;border:2px solid #ccd6e4;border-radius:6px;box-sizing:border-box;"></div>
<div class="b" style="left:1876px;top:1131px;width:182px;height:64px;border:2px solid #ccd6e4;border-radius:6px;box-sizing:border-box;"></div>
<div class="b" style="left:2076px;top:1131px;width:182px;height:64px;border:2px solid #ccd6e4;border-radius:6px;box-sizing:border-box;"></div>
<div class="b" style="left:2276px;top:1131px;width:182px;height:64px;border:2px solid #ccd6e4;border-radius:6px;box-sizing:border-box;"></div>
<div class="b" style="left:2480px;top:1133px;width:174px;height:64px;border:2px solid #ccd6e4;border-radius:6px;box-sizing:border-box;background:#fff;"></div>
<svg class="b" style="left:2618px;top:1161.5px" width="16" height="8.5" viewBox="0 0 16 8.5"><path d="M0 0H16L8 8.5Z" fill="#8b93a9"/></svg>
<div class="b" style="left:2680px;top:1133px;width:280px;height:64px;border:2px solid #ccd6e4;border-radius:6px;box-sizing:border-box;background:#fff;"></div>
<svg class="b" style="left:2924px;top:1161.5px" width="16" height="8.5" viewBox="0 0 16 8.5"><path d="M0 0H16L8 8.5Z" fill="#8b93a9"/></svg>
<div class="b" style="left:2986px;top:1133px;width:174px;height:64px;border:2px solid #ccd6e4;border-radius:6px;box-sizing:border-box;"></div>
<svg class="b" style="left:3112px;top:1145px" width="40" height="40" viewBox="0 0 24 24" ><path fill="#8b93a9" d="M19,19H5V8H19M16,1V3H8V1H6V3H5C3.890,3 3,3.890 3,5V19A2,2 0 0,0 5,21H19A2,2 0 0,0 21,19V5C21,3.890 20.100,3 19,3H18V1M17,12H12V17H17V12Z"/></svg>
<div class="b" style="left:3186px;top:1133px;width:30px;height:64px;border:2px solid #ccd6e4;border-radius:6px;box-sizing:border-box;clip-path:inset(0 18px 0 0);"></div>
<div class="b" style="left:568px;top:1275px;width:2630px;height:2px;background:#eef0f2;"></div>
<div class="b" style="left:666px;top:1205px;width:2px;height:72px;background:rgba(255,255,255,.22);"></div>
<div class="b" style="left:866px;top:1205px;width:2px;height:72px;background:rgba(255,255,255,.22);"></div>
<div class="b" style="left:1266px;top:1205px;width:2px;height:72px;background:rgba(255,255,255,.22);"></div>
<div class="b" style="left:1466px;top:1205px;width:2px;height:72px;background:rgba(255,255,255,.22);"></div>
<div class="b" style="left:1666px;top:1205px;width:2px;height:72px;background:rgba(255,255,255,.22);"></div>
<div class="b" style="left:1866px;top:1205px;width:2px;height:72px;background:rgba(255,255,255,.22);"></div>
<div class="b" style="left:2066px;top:1205px;width:2px;height:72px;background:rgba(255,255,255,.22);"></div>
<div class="b" style="left:2266px;top:1205px;width:2px;height:72px;background:rgba(255,255,255,.22);"></div>
<div class="b" style="left:2466px;top:1205px;width:2px;height:72px;background:rgba(255,255,255,.22);"></div>
<div class="b" style="left:2666px;top:1205px;width:2px;height:72px;background:rgba(255,255,255,.22);"></div>
<div class="b" style="left:2972px;top:1205px;width:2px;height:72px;background:rgba(255,255,255,.22);"></div>
<div class="b" style="left:3172px;top:1205px;width:2px;height:72px;background:rgba(255,255,255,.22);"></div>
<div class="t" style="left:592.40px;top:1223.99px;font-size:26px;line-height:34px;color:#3d4658;">1</div>
<div class="t" style="left:723.65px;top:1223.99px;font-size:26px;line-height:34px;color:#3d4658;letter-spacing:1.450px;">niedrig</div>
<div class="b" style="left:887px;top:1205px;width:379px;height:70px;overflow:hidden">
<div class="t" style="left:5.40px;top:18.99px;font-size:26px;line-height:34px;color:#3570cb;letter-spacing:1.200px;font-weight:700;">Struktur definieren</div>
</div>
<div class="b" style="left:1287px;top:1205px;width:179px;height:70px;overflow:hidden">
<div class="t" style="left:5.40px;top:18.99px;font-size:26px;line-height:34px;color:#3d4658;letter-spacing:1.100px;">Homepage überarbeiten</div>
</div>
<div class="t" style="left:1491.40px;top:1223.99px;font-size:26px;line-height:34px;color:#3570cb;letter-spacing:1.245px;text-decoration:underline;text-underline-offset:2.5px;text-decoration-thickness:1.5px;">Peter Schär</div>
<div class="t" style="left:1826.10px;top:1223.99px;font-size:26px;line-height:34px;color:#3d4658;letter-spacing:1.450px;">0</div>
<div class="t" style="left:2026.10px;top:1223.99px;font-size:26px;line-height:34px;color:#3d4658;letter-spacing:1.450px;">0</div>
<div class="t" style="left:2226.10px;top:1223.99px;font-size:26px;line-height:34px;color:#3d4658;letter-spacing:1.450px;">0</div>
<div class="b" style="left:2487px;top:1205px;width:179px;height:70px;overflow:hidden">
<div class="t" style="left:5.40px;top:18.99px;font-size:26px;line-height:34px;color:#3d4658;letter-spacing:1.100px;">Abgeschlossen</div>
</div>
<div class="b" style="left:2717.0px;top:1222.5px;width:206.0px;height:37px;background:#a8a8a8;border-radius:18.5px;"></div>
<div class="t" style="left:2737.45px;top:1224.72px;font-size:25.34px;line-height:33px;color:#fff;letter-spacing:1.858px;-webkit-text-stroke:0.6px #fff;">Geschlossen</div>
<div class="t" style="left:2997.90px;top:1223.99px;font-size:26px;line-height:34px;color:#3d4658;letter-spacing:1.300px;">03.04.2024</div>
<div class="b" style="left:568px;top:1347px;width:2630px;height:2px;background:#eef0f2;"></div>
<div class="b" style="left:666px;top:1277px;width:2px;height:72px;background:rgba(255,255,255,.22);"></div>
<div class="b" style="left:866px;top:1277px;width:2px;height:72px;background:rgba(255,255,255,.22);"></div>
<div class="b" style="left:1266px;top:1277px;width:2px;height:72px;background:rgba(255,255,255,.22);"></div>
<div class="b" style="left:1466px;top:1277px;width:2px;height:72px;background:rgba(255,255,255,.22);"></div>
<div class="b" style="left:1666px;top:1277px;width:2px;height:72px;background:rgba(255,255,255,.22);"></div>
<div class="b" style="left:1866px;top:1277px;width:2px;height:72px;background:rgba(255,255,255,.22);"></div>
<div class="b" style="left:2066px;top:1277px;width:2px;height:72px;background:rgba(255,255,255,.22);"></div>
<div class="b" style="left:2266px;top:1277px;width:2px;height:72px;background:rgba(255,255,255,.22);"></div>
<div class="b" style="left:2466px;top:1277px;width:2px;height:72px;background:rgba(255,255,255,.22);"></div>
<div class="b" style="left:2666px;top:1277px;width:2px;height:72px;background:rgba(255,255,255,.22);"></div>
<div class="b" style="left:2972px;top:1277px;width:2px;height:72px;background:rgba(255,255,255,.22);"></div>
<div class="b" style="left:3172px;top:1277px;width:2px;height:72px;background:rgba(255,255,255,.22);"></div>
<div class="t" style="left:592.40px;top:1295.99px;font-size:26px;line-height:34px;color:#3d4658;">2</div>
<div class="t" style="left:723.65px;top:1295.99px;font-size:26px;line-height:34px;color:#3d4658;letter-spacing:1.450px;">niedrig</div>
<div class="b" style="left:887px;top:1277px;width:379px;height:70px;overflow:hidden">
<div class="t" style="left:5.40px;top:18.99px;font-size:26px;line-height:34px;color:#3570cb;letter-spacing:1.200px;font-weight:700;">Inhalt ausarbeiten</div>
</div>
<div class="b" style="left:1287px;top:1277px;width:179px;height:70px;overflow:hidden">
<div class="t" style="left:5.40px;top:18.99px;font-size:26px;line-height:34px;color:#3d4658;letter-spacing:1.100px;">Homepage überarbeiten</div>
</div>
<div class="t" style="left:1491.40px;top:1295.99px;font-size:26px;line-height:34px;color:#3570cb;letter-spacing:1.245px;text-decoration:underline;text-underline-offset:2.5px;text-decoration-thickness:1.5px;">Peter Schär</div>
<div class="t" style="left:1826.10px;top:1295.99px;font-size:26px;line-height:34px;color:#3d4658;letter-spacing:1.450px;">0</div>
<div class="t" style="left:2026.10px;top:1295.99px;font-size:26px;line-height:34px;color:#3d4658;letter-spacing:1.450px;">0</div>
<div class="t" style="left:2226.10px;top:1295.99px;font-size:26px;line-height:34px;color:#3d4658;letter-spacing:1.450px;">0</div>
<div class="b" style="left:2487px;top:1277px;width:179px;height:70px;overflow:hidden">
<div class="t" style="left:5.40px;top:18.99px;font-size:26px;line-height:34px;color:#3d4658;letter-spacing:1.100px;">In Arbeit</div>
</div>
<div class="b" style="left:2755.0px;top:1292.5px;width:130.0px;height:41px;background:#e83123;border-radius:20.5px;"></div>
<div class="t" style="left:2775.60px;top:1296.83px;font-size:25.01px;line-height:33px;color:#fff;letter-spacing:2.204px;-webkit-text-stroke:0.9px #fff;">Verzug</div>
<div class="t" style="left:2997.90px;top:1295.99px;font-size:26px;line-height:34px;color:#3d4658;letter-spacing:1.300px;">01.05.2024</div>
<div class="b" style="left:568px;top:1349px;width:2630px;height:70px;background:#dfe1e6;"></div>
<div class="b" style="left:568px;top:1349px;width:4px;height:70px;background:#4aa0c0;"></div>
<div class="b" style="left:568px;top:1419px;width:2630px;height:2px;background:#eef0f2;"></div>
<div class="b" style="left:666px;top:1349px;width:2px;height:72px;background:rgba(255,255,255,.22);"></div>
<div class="b" style="left:866px;top:1349px;width:2px;height:72px;background:rgba(255,255,255,.22);"></div>
<div class="b" style="left:1266px;top:1349px;width:2px;height:72px;background:rgba(255,255,255,.22);"></div>
<div class="b" style="left:1466px;top:1349px;width:2px;height:72px;background:rgba(255,255,255,.22);"></div>
<div class="b" style="left:1666px;top:1349px;width:2px;height:72px;background:rgba(255,255,255,.22);"></div>
<div class="b" style="left:1866px;top:1349px;width:2px;height:72px;background:rgba(255,255,255,.22);"></div>
<div class="b" style="left:2066px;top:1349px;width:2px;height:72px;background:rgba(255,255,255,.22);"></div>
<div class="b" style="left:2266px;top:1349px;width:2px;height:72px;background:rgba(255,255,255,.22);"></div>
<div class="b" style="left:2466px;top:1349px;width:2px;height:72px;background:rgba(255,255,255,.22);"></div>
<div class="b" style="left:2666px;top:1349px;width:2px;height:72px;background:rgba(255,255,255,.22);"></div>
<div class="b" style="left:2972px;top:1349px;width:2px;height:72px;background:rgba(255,255,255,.22);"></div>
<div class="b" style="left:3172px;top:1349px;width:2px;height:72px;background:rgba(255,255,255,.22);"></div>
<div class="t" style="left:592.40px;top:1367.99px;font-size:26px;line-height:34px;color:#3d4658;">1</div>
<div class="t" style="left:723.65px;top:1367.99px;font-size:26px;line-height:34px;color:#3d4658;letter-spacing:1.450px;">niedrig</div>
<div class="b" style="left:887px;top:1349px;width:379px;height:70px;overflow:hidden">
<div class="t" style="left:5.40px;top:18.99px;font-size:26px;line-height:34px;color:#3570cb;letter-spacing:1.200px;font-weight:700;">Ist-Zustand aufnehmen</div>
</div>
<div class="b" style="left:1287px;top:1349px;width:179px;height:70px;overflow:hidden">
<div class="t" style="left:5.40px;top:18.99px;font-size:26px;line-height:34px;color:#3d4658;letter-spacing:1.100px;">Produktion optimieren</div>
</div>
<div class="t" style="left:1491.40px;top:1367.99px;font-size:26px;line-height:34px;color:#3570cb;letter-spacing:1.245px;text-decoration:underline;text-underline-offset:2.5px;text-decoration-thickness:1.5px;">Peter Schär</div>
<div class="t" style="left:1826.10px;top:1367.99px;font-size:26px;line-height:34px;color:#3d4658;letter-spacing:1.450px;">0</div>
<div class="t" style="left:2026.10px;top:1367.99px;font-size:26px;line-height:34px;color:#3d4658;letter-spacing:1.450px;">0</div>
<div class="t" style="left:2226.10px;top:1367.99px;font-size:26px;line-height:34px;color:#3d4658;letter-spacing:1.450px;">0</div>
<div class="b" style="left:2487px;top:1349px;width:179px;height:70px;overflow:hidden">
<div class="t" style="left:5.40px;top:18.99px;font-size:26px;line-height:34px;color:#3d4658;letter-spacing:1.100px;">In Arbeit</div>
</div>
<div class="b" style="left:2755.0px;top:1364.5px;width:130.0px;height:41px;background:#e83123;border-radius:20.5px;"></div>
<div class="t" style="left:2775.60px;top:1368.83px;font-size:25.01px;line-height:33px;color:#fff;letter-spacing:2.204px;-webkit-text-stroke:0.9px #fff;">Verzug</div>
<div class="t" style="left:2997.90px;top:1367.99px;font-size:26px;line-height:34px;color:#3d4658;letter-spacing:1.300px;">01.05.2024</div>
<div class="b" style="left:568px;top:1491px;width:2630px;height:2px;background:#eef0f2;"></div>
<div class="b" style="left:666px;top:1421px;width:2px;height:72px;background:rgba(255,255,255,.22);"></div>
<div class="b" style="left:866px;top:1421px;width:2px;height:72px;background:rgba(255,255,255,.22);"></div>
<div class="b" style="left:1266px;top:1421px;width:2px;height:72px;background:rgba(255,255,255,.22);"></div>
<div class="b" style="left:1466px;top:1421px;width:2px;height:72px;background:rgba(255,255,255,.22);"></div>
<div class="b" style="left:1666px;top:1421px;width:2px;height:72px;background:rgba(255,255,255,.22);"></div>
<div class="b" style="left:1866px;top:1421px;width:2px;height:72px;background:rgba(255,255,255,.22);"></div>
<div class="b" style="left:2066px;top:1421px;width:2px;height:72px;background:rgba(255,255,255,.22);"></div>
<div class="b" style="left:2266px;top:1421px;width:2px;height:72px;background:rgba(255,255,255,.22);"></div>
<div class="b" style="left:2466px;top:1421px;width:2px;height:72px;background:rgba(255,255,255,.22);"></div>
<div class="b" style="left:2666px;top:1421px;width:2px;height:72px;background:rgba(255,255,255,.22);"></div>
<div class="b" style="left:2972px;top:1421px;width:2px;height:72px;background:rgba(255,255,255,.22);"></div>
<div class="b" style="left:3172px;top:1421px;width:2px;height:72px;background:rgba(255,255,255,.22);"></div>
<div class="t" style="left:592.40px;top:1439.99px;font-size:26px;line-height:34px;color:#3d4658;">2</div>
<div class="t" style="left:723.65px;top:1439.99px;font-size:26px;line-height:34px;color:#3d4658;letter-spacing:1.450px;">niedrig</div>
<div class="b" style="left:887px;top:1421px;width:379px;height:70px;overflow:hidden">
<div class="t" style="left:5.40px;top:18.99px;font-size:26px;line-height:34px;color:#3570cb;letter-spacing:1.200px;font-weight:700;">Drehbank 1 ersetzen</div>
</div>
<div class="b" style="left:1287px;top:1421px;width:179px;height:70px;overflow:hidden">
<div class="t" style="left:5.40px;top:18.99px;font-size:26px;line-height:34px;color:#3d4658;letter-spacing:1.100px;">Produktion optimieren</div>
</div>
<div class="t" style="left:1491.40px;top:1439.99px;font-size:26px;line-height:34px;color:#3570cb;letter-spacing:1.245px;text-decoration:underline;text-underline-offset:2.5px;text-decoration-thickness:1.5px;">Peter Schär</div>
<div class="t" style="left:1769.80px;top:1439.99px;font-size:26px;line-height:34px;color:#3d4658;letter-spacing:1.450px;">8 500</div>
<div class="t" style="left:1937.90px;top:1439.99px;font-size:26px;line-height:34px;color:#3d4658;letter-spacing:1.450px;">120 000</div>
<div class="t" style="left:2210.15px;top:1439.99px;font-size:26px;line-height:34px;color:#3d4658;letter-spacing:1.450px;">23</div>
<div class="b" style="left:2487px;top:1421px;width:179px;height:70px;overflow:hidden">
<div class="t" style="left:5.40px;top:18.99px;font-size:26px;line-height:34px;color:#3d4658;letter-spacing:1.100px;">In Arbeit</div>
</div>
<div class="b" style="left:2755.0px;top:1436.5px;width:130.0px;height:41px;background:#e83123;border-radius:20.5px;"></div>
<div class="t" style="left:2775.60px;top:1440.83px;font-size:25.01px;line-height:33px;color:#fff;letter-spacing:2.204px;-webkit-text-stroke:0.9px #fff;">Verzug</div>
<div class="t" style="left:2997.90px;top:1439.99px;font-size:26px;line-height:34px;color:#3d4658;letter-spacing:1.300px;">21.05.2024</div>
<div class="b" style="left:568px;top:1563px;width:2630px;height:2px;background:#eef0f2;"></div>
<div class="b" style="left:666px;top:1493px;width:2px;height:72px;background:rgba(255,255,255,.22);"></div>
<div class="b" style="left:866px;top:1493px;width:2px;height:72px;background:rgba(255,255,255,.22);"></div>
<div class="b" style="left:1266px;top:1493px;width:2px;height:72px;background:rgba(255,255,255,.22);"></div>
<div class="b" style="left:1466px;top:1493px;width:2px;height:72px;background:rgba(255,255,255,.22);"></div>
<div class="b" style="left:1666px;top:1493px;width:2px;height:72px;background:rgba(255,255,255,.22);"></div>
<div class="b" style="left:1866px;top:1493px;width:2px;height:72px;background:rgba(255,255,255,.22);"></div>
<div class="b" style="left:2066px;top:1493px;width:2px;height:72px;background:rgba(255,255,255,.22);"></div>
<div class="b" style="left:2266px;top:1493px;width:2px;height:72px;background:rgba(255,255,255,.22);"></div>
<div class="b" style="left:2466px;top:1493px;width:2px;height:72px;background:rgba(255,255,255,.22);"></div>
<div class="b" style="left:2666px;top:1493px;width:2px;height:72px;background:rgba(255,255,255,.22);"></div>
<div class="b" style="left:2972px;top:1493px;width:2px;height:72px;background:rgba(255,255,255,.22);"></div>
<div class="b" style="left:3172px;top:1493px;width:2px;height:72px;background:rgba(255,255,255,.22);"></div>
<div class="t" style="left:592.40px;top:1511.99px;font-size:26px;line-height:34px;color:#3d4658;">3</div>
<div class="t" style="left:723.65px;top:1511.99px;font-size:26px;line-height:34px;color:#3d4658;letter-spacing:1.450px;">niedrig</div>
<div class="b" style="left:887px;top:1493px;width:379px;height:70px;overflow:hidden">
<div class="t" style="left:5.40px;top:18.99px;font-size:26px;line-height:34px;color:#3570cb;letter-spacing:1.200px;font-weight:700;">Lager - Laufwege optimieren</div>
</div>
<div class="b" style="left:1287px;top:1493px;width:179px;height:70px;overflow:hidden">
<div class="t" style="left:5.40px;top:18.99px;font-size:26px;line-height:34px;color:#3d4658;letter-spacing:1.100px;">Produktion optimieren</div>
</div>
<div class="t" style="left:1491.40px;top:1511.99px;font-size:26px;line-height:34px;color:#3570cb;letter-spacing:1.245px;text-decoration:underline;text-underline-offset:2.5px;text-decoration-thickness:1.5px;">Peter Schär</div>
<div class="t" style="left:1753.85px;top:1511.99px;font-size:26px;line-height:34px;color:#3d4658;letter-spacing:1.450px;">38 880</div>
<div class="t" style="left:2026.10px;top:1511.99px;font-size:26px;line-height:34px;color:#3d4658;letter-spacing:1.450px;">0</div>
<div class="t" style="left:2194.20px;top:1511.99px;font-size:26px;line-height:34px;color:#3d4658;letter-spacing:1.450px;">959</div>
<div class="b" style="left:2487px;top:1493px;width:179px;height:70px;overflow:hidden">
<div class="t" style="left:5.40px;top:18.99px;font-size:26px;line-height:34px;color:#3d4658;letter-spacing:1.100px;">Plan</div>
</div>
<div class="b" style="left:2755.0px;top:1508.5px;width:130.0px;height:41px;background:#e83123;border-radius:20.5px;"></div>
<div class="t" style="left:2775.60px;top:1512.83px;font-size:25.01px;line-height:33px;color:#fff;letter-spacing:2.204px;-webkit-text-stroke:0.9px #fff;">Verzug</div>
<div class="t" style="left:2997.90px;top:1511.99px;font-size:26px;line-height:34px;color:#3d4658;letter-spacing:1.300px;">13.05.2024</div>
<div class="b" style="left:568px;top:1635px;width:2630px;height:2px;background:#eef0f2;"></div>
<div class="b" style="left:666px;top:1565px;width:2px;height:72px;background:rgba(255,255,255,.22);"></div>
<div class="b" style="left:866px;top:1565px;width:2px;height:72px;background:rgba(255,255,255,.22);"></div>
<div class="b" style="left:1266px;top:1565px;width:2px;height:72px;background:rgba(255,255,255,.22);"></div>
<div class="b" style="left:1466px;top:1565px;width:2px;height:72px;background:rgba(255,255,255,.22);"></div>
<div class="b" style="left:1666px;top:1565px;width:2px;height:72px;background:rgba(255,255,255,.22);"></div>
<div class="b" style="left:1866px;top:1565px;width:2px;height:72px;background:rgba(255,255,255,.22);"></div>
<div class="b" style="left:2066px;top:1565px;width:2px;height:72px;background:rgba(255,255,255,.22);"></div>
<div class="b" style="left:2266px;top:1565px;width:2px;height:72px;background:rgba(255,255,255,.22);"></div>
<div class="b" style="left:2466px;top:1565px;width:2px;height:72px;background:rgba(255,255,255,.22);"></div>
<div class="b" style="left:2666px;top:1565px;width:2px;height:72px;background:rgba(255,255,255,.22);"></div>
<div class="b" style="left:2972px;top:1565px;width:2px;height:72px;background:rgba(255,255,255,.22);"></div>
<div class="b" style="left:3172px;top:1565px;width:2px;height:72px;background:rgba(255,255,255,.22);"></div>
<div class="t" style="left:592.40px;top:1583.99px;font-size:26px;line-height:34px;color:#3d4658;">4</div>
<div class="t" style="left:723.65px;top:1583.99px;font-size:26px;line-height:34px;color:#3d4658;letter-spacing:1.450px;">niedrig</div>
<div class="b" style="left:887px;top:1565px;width:379px;height:70px;overflow:hidden">
<div class="t" style="left:5.40px;top:18.99px;font-size:26px;line-height:34px;color:#3570cb;letter-spacing:1.200px;font-weight:700;">Abfallentsorgung neu verhandeln</div>
</div>
<div class="b" style="left:1287px;top:1565px;width:179px;height:70px;overflow:hidden">
<div class="t" style="left:5.40px;top:18.99px;font-size:26px;line-height:34px;color:#3d4658;letter-spacing:1.100px;">Produktion optimieren</div>
</div>
<div class="t" style="left:1491.40px;top:1583.99px;font-size:26px;line-height:34px;color:#3570cb;letter-spacing:1.245px;text-decoration:underline;text-underline-offset:2.5px;text-decoration-thickness:1.5px;">Peter Schär</div>
<div class="t" style="left:1737.90px;top:1583.99px;font-size:26px;line-height:34px;color:#3d4658;letter-spacing:1.450px;">288 000</div>
<div class="t" style="left:2026.10px;top:1583.99px;font-size:26px;line-height:34px;color:#3d4658;letter-spacing:1.450px;">0</div>
<div class="t" style="left:2153.85px;top:1583.99px;font-size:26px;line-height:34px;color:#3d4658;letter-spacing:1.450px;">18 937</div>
<div class="b" style="left:2487px;top:1565px;width:179px;height:70px;overflow:hidden">
<div class="t" style="left:5.40px;top:18.99px;font-size:26px;line-height:34px;color:#3d4658;letter-spacing:1.100px;">Idee</div>
</div>
<div class="b" style="left:2750.0px;top:1580.5px;width:140.0px;height:41px;background:#38801f;border-radius:20.5px;"></div>
<div class="t" style="left:2770.60px;top:1584.83px;font-size:25.01px;line-height:33px;color:#fff;letter-spacing:2.336px;-webkit-text-stroke:0.9px #fff;">Entwurf</div>
<div class="t" style="left:2997.90px;top:1583.99px;font-size:26px;line-height:34px;color:#3d4658;letter-spacing:1.300px;">01.05.2024</div>
<div class="b" style="left:568px;top:1707px;width:2630px;height:2px;background:#eef0f2;"></div>
<div class="b" style="left:666px;top:1637px;width:2px;height:72px;background:rgba(255,255,255,.22);"></div>
<div class="b" style="left:866px;top:1637px;width:2px;height:72px;background:rgba(255,255,255,.22);"></div>
<div class="b" style="left:1266px;top:1637px;width:2px;height:72px;background:rgba(255,255,255,.22);"></div>
<div class="b" style="left:1466px;top:1637px;width:2px;height:72px;background:rgba(255,255,255,.22);"></div>
<div class="b" style="left:1666px;top:1637px;width:2px;height:72px;background:rgba(255,255,255,.22);"></div>
<div class="b" style="left:1866px;top:1637px;width:2px;height:72px;background:rgba(255,255,255,.22);"></div>
<div class="b" style="left:2066px;top:1637px;width:2px;height:72px;background:rgba(255,255,255,.22);"></div>
<div class="b" style="left:2266px;top:1637px;width:2px;height:72px;background:rgba(255,255,255,.22);"></div>
<div class="b" style="left:2466px;top:1637px;width:2px;height:72px;background:rgba(255,255,255,.22);"></div>
<div class="b" style="left:2666px;top:1637px;width:2px;height:72px;background:rgba(255,255,255,.22);"></div>
<div class="b" style="left:2972px;top:1637px;width:2px;height:72px;background:rgba(255,255,255,.22);"></div>
<div class="b" style="left:3172px;top:1637px;width:2px;height:72px;background:rgba(255,255,255,.22);"></div>
<div class="t" style="left:592.40px;top:1655.99px;font-size:26px;line-height:34px;color:#3d4658;">5</div>
<div class="t" style="left:723.65px;top:1655.99px;font-size:26px;line-height:34px;color:#3d4658;letter-spacing:1.450px;">niedrig</div>
<div class="b" style="left:887px;top:1637px;width:379px;height:70px;overflow:hidden">
<div class="t" style="left:5.40px;top:18.99px;font-size:26px;line-height:34px;color:#3570cb;letter-spacing:1.200px;font-weight:700;">Laderoboter bei Fräsmaschine</div>
</div>
<div class="b" style="left:1287px;top:1637px;width:179px;height:70px;overflow:hidden">
<div class="t" style="left:5.40px;top:18.99px;font-size:26px;line-height:34px;color:#3d4658;letter-spacing:1.100px;">Produktion optimieren</div>
</div>
<div class="t" style="left:1491.40px;top:1655.99px;font-size:26px;line-height:34px;color:#3570cb;letter-spacing:1.245px;text-decoration:underline;text-underline-offset:2.5px;text-decoration-thickness:1.5px;">Peter Schär</div>
<div class="t" style="left:1753.85px;top:1655.99px;font-size:26px;line-height:34px;color:#3d4658;letter-spacing:1.450px;">90 000</div>
<div class="t" style="left:1937.90px;top:1655.99px;font-size:26px;line-height:34px;color:#3d4658;letter-spacing:1.450px;">150 000</div>
<div class="t" style="left:2226.10px;top:1655.99px;font-size:26px;line-height:34px;color:#3d4658;letter-spacing:1.450px;">0</div>
<div class="b" style="left:2487px;top:1637px;width:179px;height:70px;overflow:hidden">
<div class="t" style="left:5.40px;top:18.99px;font-size:26px;line-height:34px;color:#3d4658;letter-spacing:1.100px;">Geprüft</div>
</div>
<div class="b" style="left:2733.25px;top:1652.5px;width:173.5px;height:41px;background:#38801f;border-radius:20.5px;"></div>
<div class="t" style="left:2753.85px;top:1656.83px;font-size:25.01px;line-height:33px;color:#fff;letter-spacing:1.889px;-webkit-text-stroke:0.9px #fff;">In Prüfung</div>
<div class="t" style="left:2997.90px;top:1655.99px;font-size:26px;line-height:34px;color:#3d4658;letter-spacing:1.300px;">15.05.2024</div>
<div class="b" style="left:568px;top:1779px;width:2630px;height:2px;background:#eef0f2;"></div>
<div class="b" style="left:666px;top:1709px;width:2px;height:72px;background:rgba(255,255,255,.22);"></div>
<div class="b" style="left:866px;top:1709px;width:2px;height:72px;background:rgba(255,255,255,.22);"></div>
<div class="b" style="left:1266px;top:1709px;width:2px;height:72px;background:rgba(255,255,255,.22);"></div>
<div class="b" style="left:1466px;top:1709px;width:2px;height:72px;background:rgba(255,255,255,.22);"></div>
<div class="b" style="left:1666px;top:1709px;width:2px;height:72px;background:rgba(255,255,255,.22);"></div>
<div class="b" style="left:1866px;top:1709px;width:2px;height:72px;background:rgba(255,255,255,.22);"></div>
<div class="b" style="left:2066px;top:1709px;width:2px;height:72px;background:rgba(255,255,255,.22);"></div>
<div class="b" style="left:2266px;top:1709px;width:2px;height:72px;background:rgba(255,255,255,.22);"></div>
<div class="b" style="left:2466px;top:1709px;width:2px;height:72px;background:rgba(255,255,255,.22);"></div>
<div class="b" style="left:2666px;top:1709px;width:2px;height:72px;background:rgba(255,255,255,.22);"></div>
<div class="b" style="left:2972px;top:1709px;width:2px;height:72px;background:rgba(255,255,255,.22);"></div>
<div class="b" style="left:3172px;top:1709px;width:2px;height:72px;background:rgba(255,255,255,.22);"></div>
<div class="t" style="left:592.40px;top:1727.99px;font-size:26px;line-height:34px;color:#3d4658;">6</div>
<div class="t" style="left:723.65px;top:1727.99px;font-size:26px;line-height:34px;color:#3d4658;letter-spacing:1.450px;">niedrig</div>
<div class="b" style="left:887px;top:1709px;width:379px;height:70px;overflow:hidden">
<div class="t" style="left:5.40px;top:18.99px;font-size:26px;line-height:34px;color:#3570cb;letter-spacing:1.200px;font-weight:700;">Scanner für Kanban</div>
</div>
<div class="b" style="left:1287px;top:1709px;width:179px;height:70px;overflow:hidden">
<div class="t" style="left:5.40px;top:18.99px;font-size:26px;line-height:34px;color:#3d4658;letter-spacing:1.100px;">Produktion optimieren</div>
</div>
<div class="t" style="left:1491.40px;top:1727.99px;font-size:26px;line-height:34px;color:#3570cb;letter-spacing:1.245px;text-decoration:underline;text-underline-offset:2.5px;text-decoration-thickness:1.5px;">Peter Schär</div>
<div class="t" style="left:1826.10px;top:1727.99px;font-size:26px;line-height:34px;color:#3d4658;letter-spacing:1.450px;">0</div>
<div class="t" style="left:1953.85px;top:1727.99px;font-size:26px;line-height:34px;color:#3d4658;letter-spacing:1.450px;">75 000</div>
<div class="t" style="left:2226.10px;top:1727.99px;font-size:26px;line-height:34px;color:#3d4658;letter-spacing:1.450px;">0</div>
<div class="b" style="left:2487px;top:1709px;width:179px;height:70px;overflow:hidden">
<div class="t" style="left:5.40px;top:18.99px;font-size:26px;line-height:34px;color:#3d4658;letter-spacing:1.100px;">Abgeschlossen</div>
</div>
<div class="b" style="left:2717.0px;top:1726.5px;width:206.0px;height:37px;background:#a8a8a8;border-radius:18.5px;"></div>
<div class="t" style="left:2737.45px;top:1728.72px;font-size:25.34px;line-height:33px;color:#fff;letter-spacing:1.858px;-webkit-text-stroke:0.6px #fff;">Geschlossen</div>
<div class="t" style="left:2997.90px;top:1727.99px;font-size:26px;line-height:34px;color:#3d4658;letter-spacing:1.300px;">07.05.2024</div>
<div class="b" style="left:0px;top:0px;width:3252px;height:95px;background:#3063bb;box-shadow:0 4px 8px -2px rgba(0,0,0,.2),0 8px 10px 0 rgba(0,0,0,.14),0 2px 20px 0 rgba(0,0,0,.12);"></div>
<div class="b" style="left:33px;top:29.0px;width:42px;height:7.5px;background:#fff;border-radius:2px;"></div>
<div class="b" style="left:33px;top:43.5px;width:42px;height:7.5px;background:#fff;border-radius:2px;"></div>
<div class="b" style="left:33px;top:58.0px;width:42px;height:7.5px;background:#fff;border-radius:2px;"></div>
<div class="t" style="left:141.90px;top:21.14px;font-size:40px;line-height:52px;color:#fff;letter-spacing:-1.017px;">7APP</div>
<div class="b" style="left:2590px;top:19px;width:100px;height:56px;background:#3874d0;border-radius:8px;"></div>
<svg class="b" style="left:2616px;top:23px" width="48" height="48" viewBox="0 0 512 512" ><path fill="#fff" d="M512 464c0 26.51-21.49 48-48 48H48c-26.51 0-48-21.49-48-48V200.724a48 48 0 0 1 18.387-37.776c24.913-19.529 45.501-35.365 164.2-121.511C199.412 29.17 232.797-.347 256 .003c23.198-.354 56.596 29.172 73.413 41.433 118.687 86.137 139.303 101.995 164.2 121.512A48 48 0 0 1 512 200.724V464zm-65.666-196.605c-2.563-3.728-7.7-4.595-11.339-1.907-22.845 16.873-55.462 40.705-105.582 77.079-16.825 12.266-50.21 41.781-73.413 41.43-23.211.344-56.559-29.143-73.413-41.43-50.114-36.37-82.734-60.204-105.582-77.079-3.639-2.688-8.776-1.821-11.339 1.907l-9.072 13.196a7.998 7.998 0 0 0 1.839 10.967c22.887 16.899 55.454 40.69 105.303 76.868 20.274 14.781 56.524 47.813 92.264 47.573 35.724.242 71.961-32.771 92.263-47.573 49.85-36.179 82.418-59.97 105.303-76.868a7.998 7.998 0 0 0 1.839-10.967l-9.071-13.196z"/></svg>
<div class="b" style="left:2666px;top:3px;width:40px;height:40px;background:#ea5f5a;border-radius:20px;"></div>
<div class="t" style="left:2679.00px;top:7.34px;font-size:25px;line-height:32px;color:#fff;">6</div>
<div class="b" style="left:2706px;top:19px;width:100px;height:56px;background:#3874d0;border-radius:8px;box-shadow:0 6px 2px -4px rgba(0,0,0,.2),0 4px 4px 0 rgba(0,0,0,.14),0 2px 10px 0 rgba(0,0,0,.12);"></div>
<svg class="b" style="left:2732px;top:23px" width="48" height="48" viewBox="0 0 24 24" ><path fill="#fff" d="M14 2H6c-1.1 0-1.99.9-1.99 2L4 20c0 1.1.89 2 1.99 2H18c1.1 0 2-.9 2-2V8l-6-6zm2 14h-3v3h-2v-3H8v-2h3v-3h2v3h3v2zm-3-7V3.5L18.5 9H13z"/></svg>
<div class="b" style="left:2822px;top:19px;width:258px;height:56px;background:#3874d0;border-radius:8px;box-shadow:0 6px 2px -4px rgba(0,0,0,.2),0 4px 4px 0 rgba(0,0,0,.14),0 2px 10px 0 rgba(0,0,0,.12);"></div>
<div class="t" style="left:2849.72px;top:33.10px;font-size:22.79px;line-height:30px;color:#fff;letter-spacing:1.665px;-webkit-text-stroke:0.65px #fff;">CHLIBESSER.CH</div>
<svg class="b" style="left:3128px;top:15px" width="64" height="64" viewBox="0 0 64 64">
<defs><clipPath id="av"><circle cx="32" cy="32" r="32"/></clipPath>
<filter id="f1" x="-20%" y="-20%" width="140%" height="140%"><feGaussianBlur stdDeviation="0.9"/></filter>
<filter id="f2" x="-20%" y="-20%" width="140%" height="140%"><feGaussianBlur stdDeviation="0.55"/></filter>
<filter id="f3" x="-30%" y="-30%" width="160%" height="160%"><feGaussianBlur stdDeviation="1.6"/></filter>
<linearGradient id="bg" x1="0" y1="0" x2="1" y2="0.25"><stop offset="0" stop-color="#d2cfd8"/><stop offset="0.55" stop-color="#cfc9d1"/><stop offset="1" stop-color="#b7adb6"/></linearGradient>
<linearGradient id="hr" x1="0" y1="0" x2="0" y2="1"><stop offset="0" stop-color="#93795f"/><stop offset="0.5" stop-color="#917b69"/><stop offset="1" stop-color="#9c928e"/></linearGradient></defs>
<g clip-path="url(#av)">
<rect width="64" height="64" fill="url(#bg)"/>
<g filter="url(#f2)">
<path d="M-2 66 L7 54 L15.800 44.300 L21 53 L28 68Z" fill="#1c181a"/>
<path d="M42.500 48.300 L50 49.800 L58 53.500 L66 61 L66 68 L42 68Z" fill="#1e191b"/>
<path d="M16.300 44.800 L22 49 L32 57 L43 48.300 L43 68 L26 68 L20.500 54Z" fill="#f3eced"/>
<path d="M32.800 58.800 L38.600 58.600 L40.500 68 L30.500 68Z" fill="#a42a25"/>
</g>
<g filter="url(#f1)">
<path d="M22 46 Q24 55 32 57 Q41 55 42.500 46Z" fill="#d49a85"/>
</g><g filter="url(#f2)"><path d="M13.800 28.500 C10.800 13 19 3 31 3.600 C43.500 3 50.300 12 47.800 28.500 C47.200 30.500 45.600 30.500 45.200 27.500 L44 18 L31 12.500 L18 18 L16.400 28 C16 30.500 14.400 30.500 13.800 28.500Z" fill="url(#hr)"/></g><g filter="url(#f1)">
<path d="M16 29 C15.200 20 17.500 15.500 22 14 C27 12.400 35 12.400 40 14 C44.500 15.500 46.800 20 46 29 C46.200 39 45.500 45 41.500 50 C37.500 54.300 26.500 54.300 22.500 50 C18.500 45 16.300 39 16 29Z" fill="#e2b09c"/>
</g>
<g filter="url(#f3)">
<ellipse cx="30" cy="21" rx="9" ry="5" fill="#efcbbb"/>
<ellipse cx="25.500" cy="37" rx="4.500" ry="4.500" fill="#edc2b1" opacity=".8"/>
<ellipse cx="41" cy="40" rx="3.500" ry="7" fill="#d39b86" opacity=".55"/>
<ellipse cx="31" cy="49" rx="7" ry="2.500" fill="#d9a48f" opacity=".7"/>
</g>
<g filter="url(#f2)">
<ellipse cx="27.300" cy="29.200" rx="2.400" ry="1.100" fill="#5b5863"/>
<ellipse cx="39.800" cy="29.200" rx="2.400" ry="1.100" fill="#5b5863"/>
<path d="M23.300 26.700 Q27 25.200 30.800 26.800" stroke="#b78f7b" stroke-width="1" fill="none"/>
<path d="M36.300 26.800 Q40 25.200 43.700 26.700" stroke="#b78f7b" stroke-width="1" fill="none"/>
<path d="M35.800 30.500 L36.400 36.500 Q35 38.800 31.800 38.200" stroke="#c8907b" stroke-width="1.400" fill="none"/>
<path d="M27.800 42.500 Q34.300 45 40.700 42" stroke="#cd8683" stroke-width="1.600" fill="none"/>
<path d="M17 27 L17.500 34" stroke="#c99c8c" stroke-width="1.200" fill="none"/>
</g>
</g></svg>
</body></html>
